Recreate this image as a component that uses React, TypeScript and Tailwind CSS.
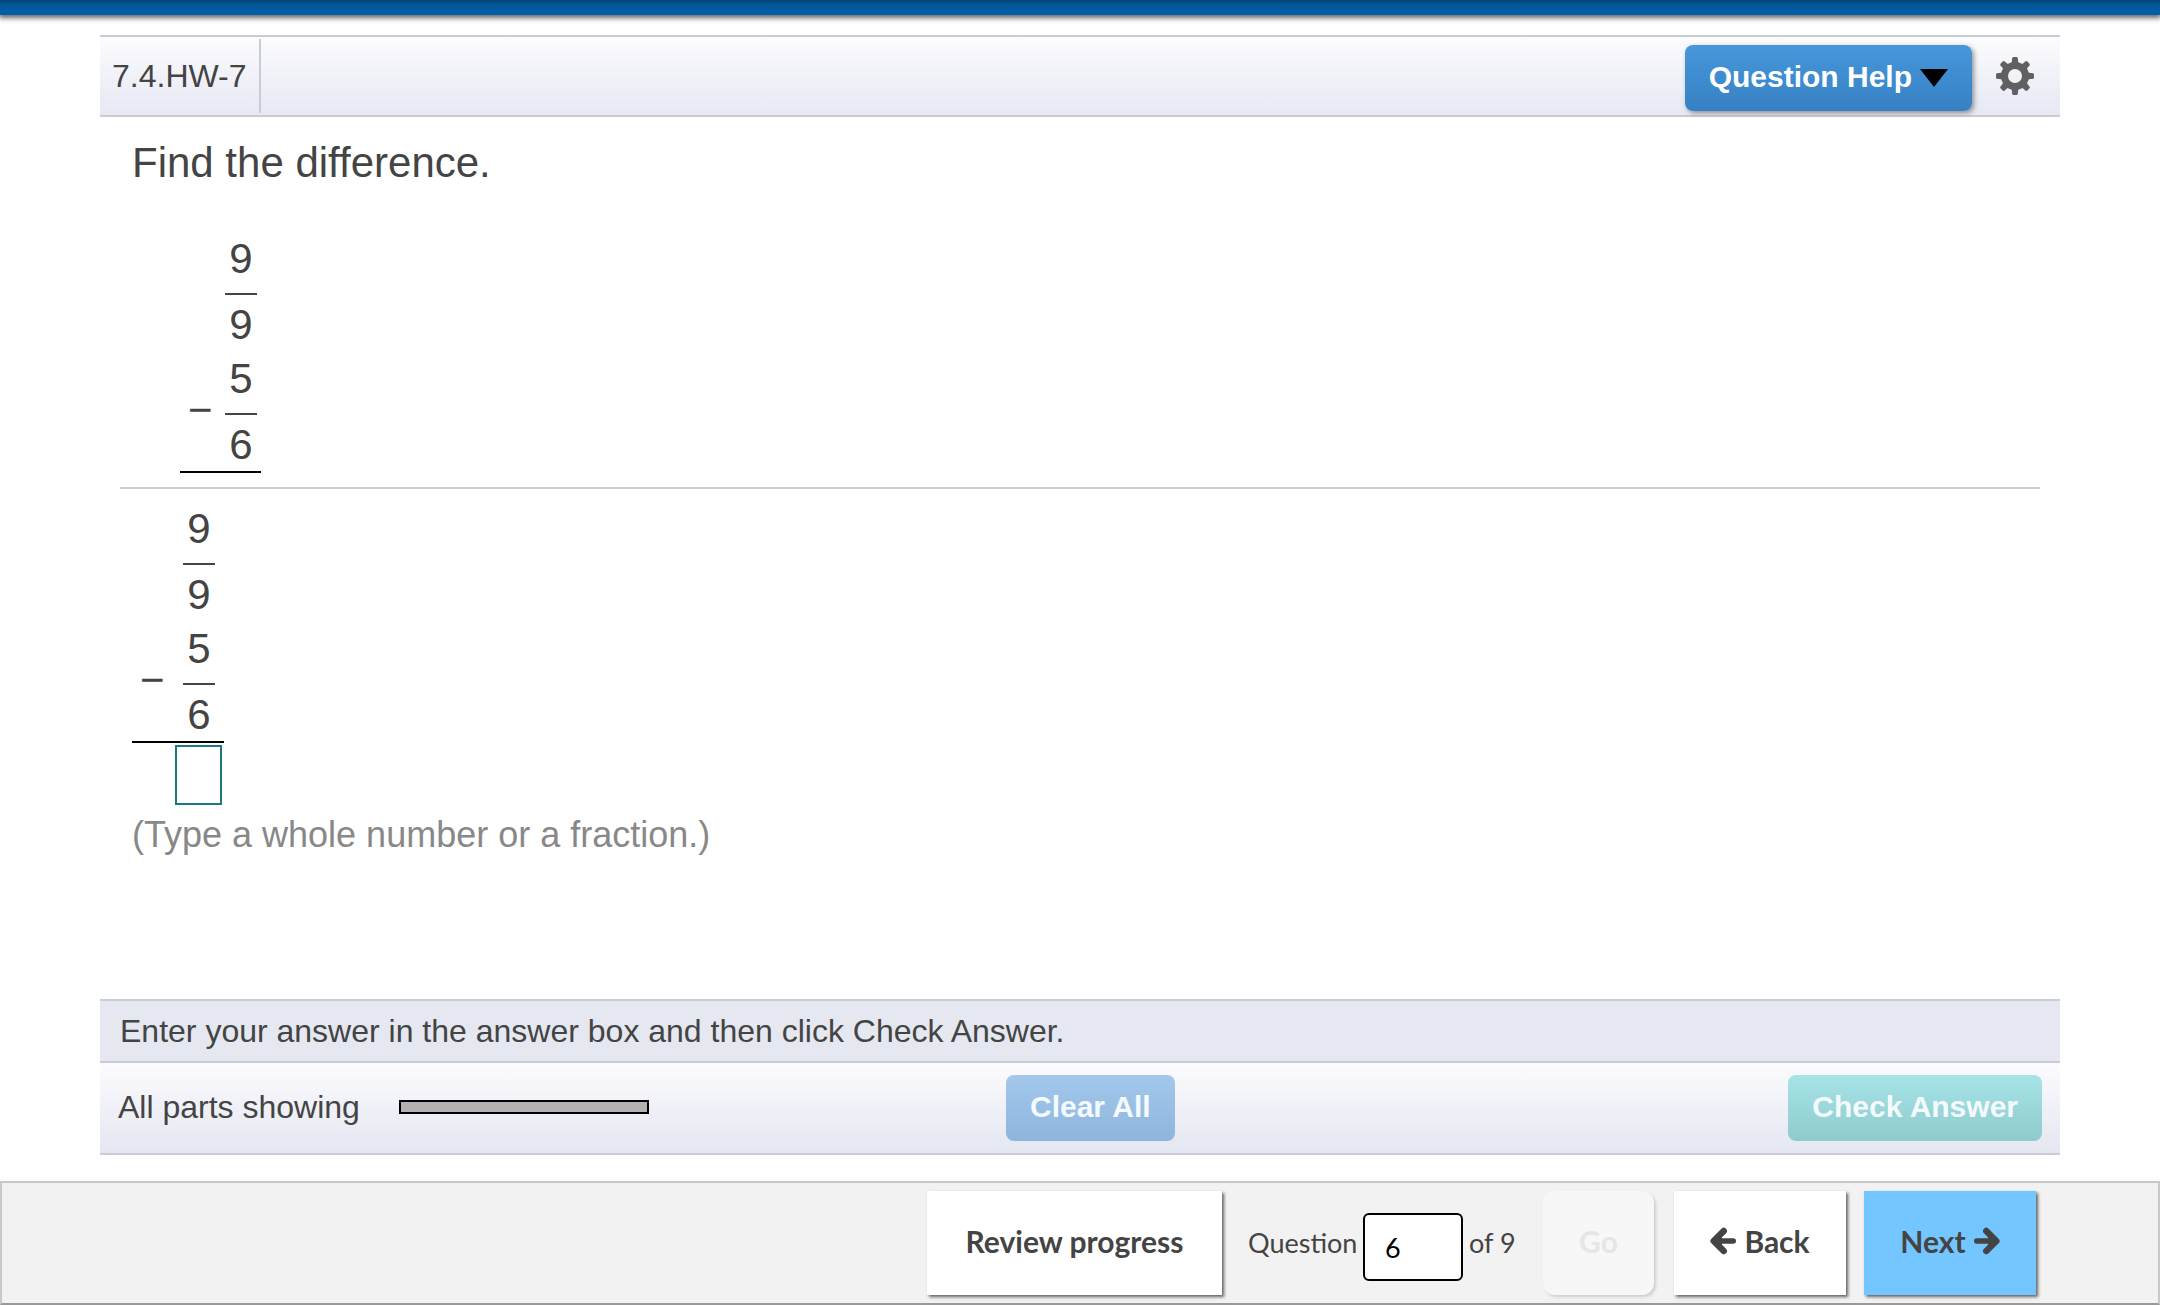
import React, { useState } from 'react';

interface FractionProps {
  top: number;
  bottom: number;
}

interface SubtractionProps {
  className?: string;
}

const gearTeeth = [0, 45, 90, 135, 180, 225, 270, 315];

const GearIcon: React.FC = () => (
  <svg viewBox="0 0 40 40" className="h-10 w-10" aria-hidden="true">
    <g fill="#606062">
      {gearTeeth.map((angle) => (
        <path
          key={angle}
          d="M15 9 C17 7 17 5 17 3 Q17 1 18.500 1 H21.500 Q23 1 23 3 C23 5 23 7 25 9 Z"
          transform={`rotate(${angle} 20 20)`}
        />
      ))}
    </g>
    <circle cx="20" cy="20" r="10.5" fill="none" stroke="#606062" strokeWidth="7" />
  </svg>
);

const ArrowIcon: React.FC<{ direction: 'left' | 'right' }> = ({ direction }) => (
  <svg
    viewBox="0 0 26 28"
    className={`h-7 w-[26px] ${direction === 'right' ? 'rotate-180' : ''}`}
    fill="none"
    stroke="#444"
    aria-hidden="true"
  >
    <path d="M13.700 4 L3.700 14 L13.700 24" strokeWidth="6.500" strokeLinecap="round" strokeLinejoin="round" />
    <path d="M5 14 H23.200" strokeWidth="5.600" strokeLinecap="round" />
    <path d="M5 14 L12 8 V20 Z" fill="#444" stroke="none" />
  </svg>
);

const Fraction: React.FC<FractionProps> = ({ top, bottom }) => (
  <div className="w-8 text-center text-[42px] leading-[48px]">
    <div className="border-b-2 border-[#444] pb-[10px]">{top}</div>
    <div className="pt-1.5">{bottom}</div>
  </div>
);

// Vertical subtraction of two fractions with a rule under it
const Subtraction: React.FC<SubtractionProps> = ({ className = '' }) => (
  <div className={`flex flex-col gap-1.5 border-b-2 border-black pb-0.5 pl-2 ${className}`}>
    <div className="flex justify-end">
      <Fraction top={9} bottom={9} />
    </div>
    <div className="flex items-center justify-between">
      <span className="pb-1 text-[42px] leading-[48px]">−</span>
      <Fraction top={5} bottom={6} />
    </div>
  </div>
);

const App: React.FC = () => {
  const [answer, setAnswer] = useState('');
  const [question, setQuestion] = useState('6');

  return (
    <div className="flex min-h-screen flex-col bg-white font-['Liberation_Sans',Arial,sans-serif] text-[#444]">
      <div className="h-[15px] bg-linear-to-b from-[#0b4272] via-[#00569a] via-30% to-[#0061a8] shadow-[0_2px_5px_1px_rgba(0,0,0,0.6)]" />

      <main className="mx-[100px] mt-5 flex flex-1 flex-col">
        <header className="flex h-[82px] items-center border-y-2 border-[#c8ccd2] bg-linear-to-b from-[#fcfcfe] to-[#e6e8f3] pr-[25px]">
          <h1 className="flex h-[74px] items-center border-r-2 border-[#c8ccd8] px-3 text-[32px] leading-10">
            7.4.HW-7
          </h1>
          <button className="mt-1 ml-auto flex h-[66px] items-center gap-2 rounded-lg bg-linear-to-b from-[#4797dc] to-[#3681c3] px-6 pb-1 text-[30px] font-bold text-white shadow-[2px_2px_5px_rgba(0,0,0,0.4)]">
            Question Help
            <svg viewBox="0 0 28 18" className="mt-1 h-[18px] w-7" aria-hidden="true">
              <path d="M0 0 H28 L14 18 Z" fill="#000" />
            </svg>
          </button>
          <button aria-label="Settings" className="ml-[23px]">
            <GearIcon />
          </button>
        </header>

        <section className="flex-1 px-5 pt-[22px]">
          <h2 className="pl-3 text-[42px] leading-[48px]">Find the difference.</h2>
          <Subtraction className="mt-12 ml-[60px] w-[81px] pr-1" />
          <hr className="mt-3.5 border-t-2 border-[#ccc]" />
          <div className="pt-4 pl-3">
            <div className="w-[92px]">
              <Subtraction className="w-[92px] pr-[9px]" />
              <input
                type="text"
                aria-label="Answer"
                value={answer}
                onChange={(e) => setAnswer(e.target.value)}
                className="mt-0.5 mr-0.5 ml-auto block h-[60px] w-[47px] border-2 border-[#1c7685] text-center text-[32px] outline-none"
              />
            </div>
            <p className="mt-[10px] text-[36px] leading-10 text-[#888]">(Type a whole number or a fraction.)</p>
          </div>
        </section>

        <p className="border-y-2 border-[#c9ccd8] bg-[#e5e8f0] px-5 py-2.5 text-[32px] leading-10">
          Enter your answer in the answer box and then click Check Answer.
        </p>
        <div className="grid h-[92px] grid-cols-[6fr_7fr] items-center border-b-2 border-[#c9ccd8] bg-linear-to-b from-[#fcfcfe] to-[#e4e6f1] px-[18px]">
          <div className="flex items-center gap-[39px] pb-0.5 text-[32px] leading-10">
            <span>All parts showing</span>
            <div
              role="progressbar"
              aria-label="Parts showing"
              aria-valuenow={100}
              className="h-3.5 w-[250px] border-2 border-black bg-[#b2b0b1]"
            />
          </div>
          <div className="flex items-center justify-between text-[30px] font-bold text-[#f5faff]">
            <button className="h-[66px] rounded-lg bg-linear-to-b from-[#a3c8ec] to-[#8fb5de] px-6 pb-1">Clear All</button>
            <button className="h-[66px] rounded-lg bg-linear-to-b from-[#a6e4e7] to-[#8fcbcd] px-6 pb-1">Check Answer</button>
          </div>
        </div>
      </main>

      <footer className="mt-[26px] flex items-center justify-end border-2 border-[#c8c8c8] border-b-[#999] bg-[#f2f2f2] py-2 pr-[122px] font-[Lato,sans-serif]">
        <button className="h-[104px] w-[295px] bg-white pb-1 text-[30px] font-bold shadow-[2px_2px_3px_rgba(0,0,0,0.6)]">
          Review progress
        </button>
        <div className="ml-[26px] flex items-center text-[27px]">
          <label htmlFor="question" className="w-[115px]">Question</label>
          <input
            id="question"
            type="text"
            value={question}
            onChange={(e) => setQuestion(e.target.value)}
            className="mt-2 h-[68px] w-[100px] rounded-md border-2 border-black bg-white px-5 text-black"
          />
          <span className="w-20 pl-1.5">of 9</span>
        </div>
        <button
          disabled
          className="h-[104px] w-[111px] rounded-xl bg-[#f7f7f7] pb-1 text-[30px] font-bold text-[#e6e6e6] shadow-[2px_2px_3px_rgba(0,0,0,0.15)]"
        >
          Go
        </button>
        <button className="ml-5 flex h-[104px] w-[172px] items-center justify-center gap-2 bg-white pb-1 text-[30px] font-bold shadow-[2px_2px_3px_rgba(0,0,0,0.6)]">
          <ArrowIcon direction="left" />
          Back
        </button>
        <button className="ml-[18px] flex h-[104px] w-[172px] items-center justify-center gap-2 bg-[#73c6ff] pb-1 text-[30px] font-bold shadow-[2px_2px_3px_rgba(0,0,0,0.6)]">
          Next
          <ArrowIcon direction="right" />
        </button>
      </footer>
    </div>
  );
};

export default App;
